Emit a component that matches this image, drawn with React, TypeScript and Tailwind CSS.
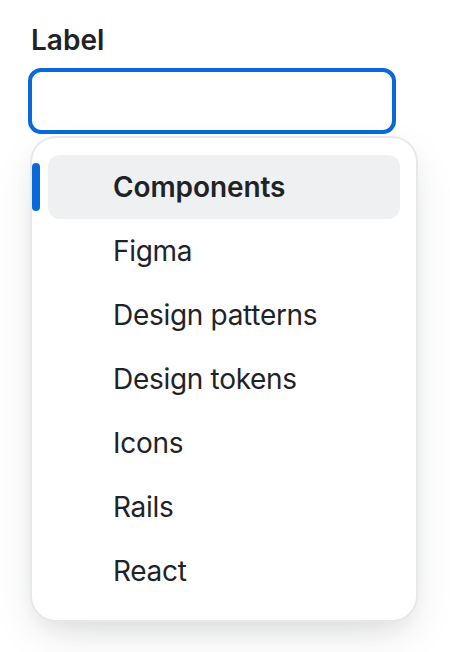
import React from "react";

const items = ["Components", "Figma", "Design patterns", "Design tokens", "Icons", "Rails", "React"];

export default function App() {
  return (
    <div className="min-h-[652px] w-[450px] bg-white pt-[20px] pl-[28px] text-[#1f2328]" style={{ fontFamily: "Inter, 'Noto Sans', sans-serif" }}>
      <label className="block text-[28px] leading-[40px] font-semibold pl-[3px]">Label</label>
      <div className="mt-[8px] h-[66px] w-[368px] rounded-[13px] border-[4px] border-[#0969da] bg-white"></div>
      <div className="mt-[4px] ml-[4px] w-[384px] rounded-[24px] bg-white py-[17px] px-[16px] shadow-[0_0_0_2px_#e6e9ec,0_12px_24px_-6px_rgba(37,41,46,0.08),0_16px_48px_-8px_rgba(37,41,46,0.14)]">
        {items.map((it, i) => (
          <div key={it} className={`relative flex h-[64px] items-center rounded-[12px] pl-[65px] text-[28px] ${i === 0 ? "bg-[#eef0f2] font-semibold tracking-[-0.1px]" : "tracking-[-0.3px]"}`}>
            {i === 0 && <span className="absolute left-[-16px] top-[8px] h-[48px] w-[8px] rounded-[4px] bg-[#0969da]"></span>}
            {it}
          </div>
        ))}
      </div>
    </div>
  );
}
